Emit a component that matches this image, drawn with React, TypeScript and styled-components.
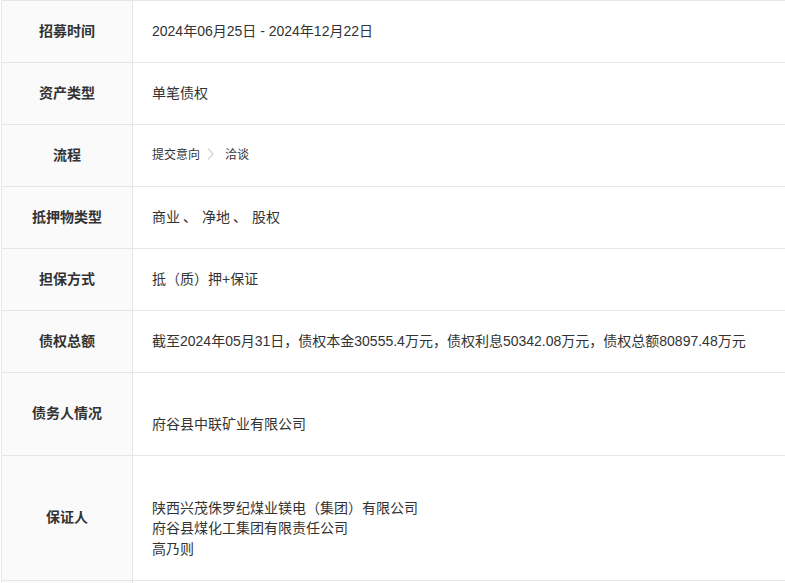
import React from "react";
import styled, { createGlobalStyle } from "styled-components";

const GlobalStyle = createGlobalStyle`
  html, body {
    margin: 0;
    padding: 0;
    background: #ffffff;
    overflow: hidden;
  }
  body {
    font-family: "Liberation Sans", "Noto Sans CJK SC", sans-serif;
    color: #333333;
  }
`;

const Page = styled.div`
  padding-left: 1px;
  width: 840px;
`;

const Table = styled.div`
  border-top: 1px solid #e6e6e6;
  border-left: 1px solid #e6e6e6;
  display: flex;
  flex-direction: column;
`;

const Row = styled.div<{ $h: number }>`
  display: grid;
  grid-template-columns: 131px 1fr;
  min-height: ${(p) => p.$h}px;
  border-bottom: 1px solid #e6e6e6;
`;

const Label = styled.div`
  background: #fafafa;
  border-right: 1px solid #e6e6e6;
  display: flex;
  align-items: center;
  justify-content: center;
  padding-bottom: 4px;
  font-size: 14px;
  font-weight: bold;
  color: #333333;
`;

const Value = styled.div`
  display: flex;
  align-items: center;
  padding: 0 19px 4px;
  font-size: 14px;
  color: #333333;
`;

const Lines = styled.div`
  line-height: 20.5px;
  padding-top: 4px;
`;

const Flow = styled.div`
  display: flex;
  align-items: center;
  font-size: 12px;
  color: #333333;
`;

const Step = styled.span``;

const Arrow = styled.svg`
  margin: 0 11px 0 7px;
  display: block;
`;

const Sep = styled.span`
  margin: 0 5px 0 3px;
`;

const rows: { label: string; h: number; content: React.ReactNode }[] = [
  { label: "招募时间", h: 61, content: "2024年06月25日 - 2024年12月22日" },
  { label: "资产类型", h: 61, content: "单笔债权" },
  {
    label: "流程",
    h: 61,
    content: (
      <Flow>
        <Step>提交意向</Step>
        <Arrow width="7" height="14" viewBox="0 0 7 14">
          <polyline points="1,1.5 6,7 1,12.5" fill="none" stroke="#d4d4d4" strokeWidth="1.2" />
        </Arrow>
        <Step>洽谈</Step>
      </Flow>
    ),
  },
  {
    label: "抵押物类型",
    h: 61,
    content: (
      <span>
        商业<Sep>、</Sep>净地<Sep>、</Sep>股权
      </span>
    ),
  },
  { label: "担保方式", h: 61, content: "抵（质）押+保证" },
  {
    label: "债权总额",
    h: 61,
    content: "截至2024年05月31日，债权本金30555.4万元，债权利息50342.08万元，债权总额80897.48万元",
  },
  {
    label: "债务人情况",
    h: 82,
    content: (
      <Lines>
        <br />
        府谷县中联矿业有限公司
      </Lines>
    ),
  },
  {
    label: "保证人",
    h: 124,
    content: (
      <Lines>
        <br />
        陕西兴茂侏罗纪煤业镁电（集团）有限公司
        <br />
        府谷县煤化工集团有限责任公司
        <br />
        高乃则
      </Lines>
    ),
  },
  { label: "", h: 61, content: "" },
];

export default function App() {
  return (
    <Page>
      <GlobalStyle />
      <Table>
        {rows.map((r, i) => (
          <Row key={i} $h={r.h}>
            <Label>{r.label}</Label>
            <Value>{r.content}</Value>
          </Row>
        ))}
      </Table>
    </Page>
  );
}
